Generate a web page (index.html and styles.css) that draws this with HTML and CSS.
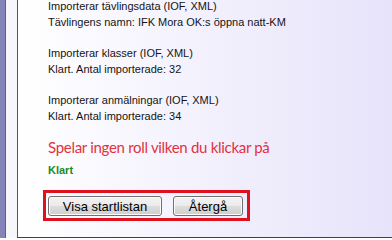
FILE: index.html
```html
<!DOCTYPE html>
<html lang="sv">
<head>
<meta charset="utf-8">
<title>Import</title>
<link rel="stylesheet" href="styles.css">
</head>
<body>
<div class="frame">
  <div class="rail"></div>
  <div class="gutter"></div>
  <div class="panel">
    <div class="log first">
      <div>Importerar tävlingsdata (IOF, XML)</div>
      <div>Tävlingens namn: IFK Mora OK:s öppna natt-KM</div>
    </div>
    <div class="log">
      <div>Importerar klasser (IOF, XML)</div>
      <div>Klart. Antal importerade: 32</div>
    </div>
    <div class="log">
      <div>Importerar anmälningar (IOF, XML)</div>
      <div>Klart. Antal importerade: 34</div>
    </div>
    <div class="msg">Spelar ingen roll vilken du klickar på</div>
    <div class="status">Klart</div>
    <div class="actions">
      <button class="btn wide">Visa startlistan</button>
      <button class="btn narrow">Återgå</button>
    </div>
  </div>
</div>
</body>
</html>
```
FILE: styles.css
```css
html, body {
  margin: 0;
  padding: 0;
}
body {
  width: 392px;
  height: 238px;
  overflow: hidden;
  background: #ffffff;
}
.frame {
  display: flex;
  height: 238px;
}
.rail {
  width: 5px;
  background: #8484ba;
  border-right: 1px solid #5c5c98;
}
.gutter {
  width: 11px;
  background: #f7f7fb;
}
.panel {
  flex: 1;
  box-sizing: border-box;
  height: 238px;
  border-left: 1px solid #555555;
  border-bottom: 1px solid #404040;
  background: linear-gradient(to right, #ffffff 0%, #f4f2fd 45%, #e7e3fa 100%);
  padding-left: 30px;
  display: flex;
  flex-direction: column;
  align-items: flex-start;
  font-family: "Liberation Sans", Arial, sans-serif;
  font-size: 11px;
  color: #141414;
}
.log {
  line-height: 16px;
  margin-top: 15px;
}
.log.first {
  margin-top: -2px;
}
.msg {
  font-family: Lato, "Open Sans", sans-serif;
  font-size: 15px;
  line-height: 20px;
  letter-spacing: -0.3px;
  color: #e3323f;
  margin-top: 13px;
}
.status {
  font-weight: bold;
  color: #1c8a1c;
  line-height: 16px;
  margin-top: 5px;
}
.actions {
  display: flex;
  gap: 11px;
  margin-top: 12px;
  margin-left: -5px;
  border: 3px solid #e0111f;
  padding: 3px 4px 2px 2px;
}
.btn {
  height: 20px;
  box-sizing: border-box;
  padding: 0;
  margin: 0;
  border: 1px solid #707070;
  border-radius: 3px;
  background: linear-gradient(to bottom, #f3f3f3 0%, #ebebeb 50%, #dddddd 50%, #cfcfcf 100%);
  box-shadow: inset 0 0 0 1px #fbfbfb;
  font-family: "Liberation Sans", Arial, sans-serif;
  font-size: 13px;
  line-height: 17px;
  color: #000000;
}
.wide {
  width: 114px;
}
.narrow {
  width: 70px;
}
```
